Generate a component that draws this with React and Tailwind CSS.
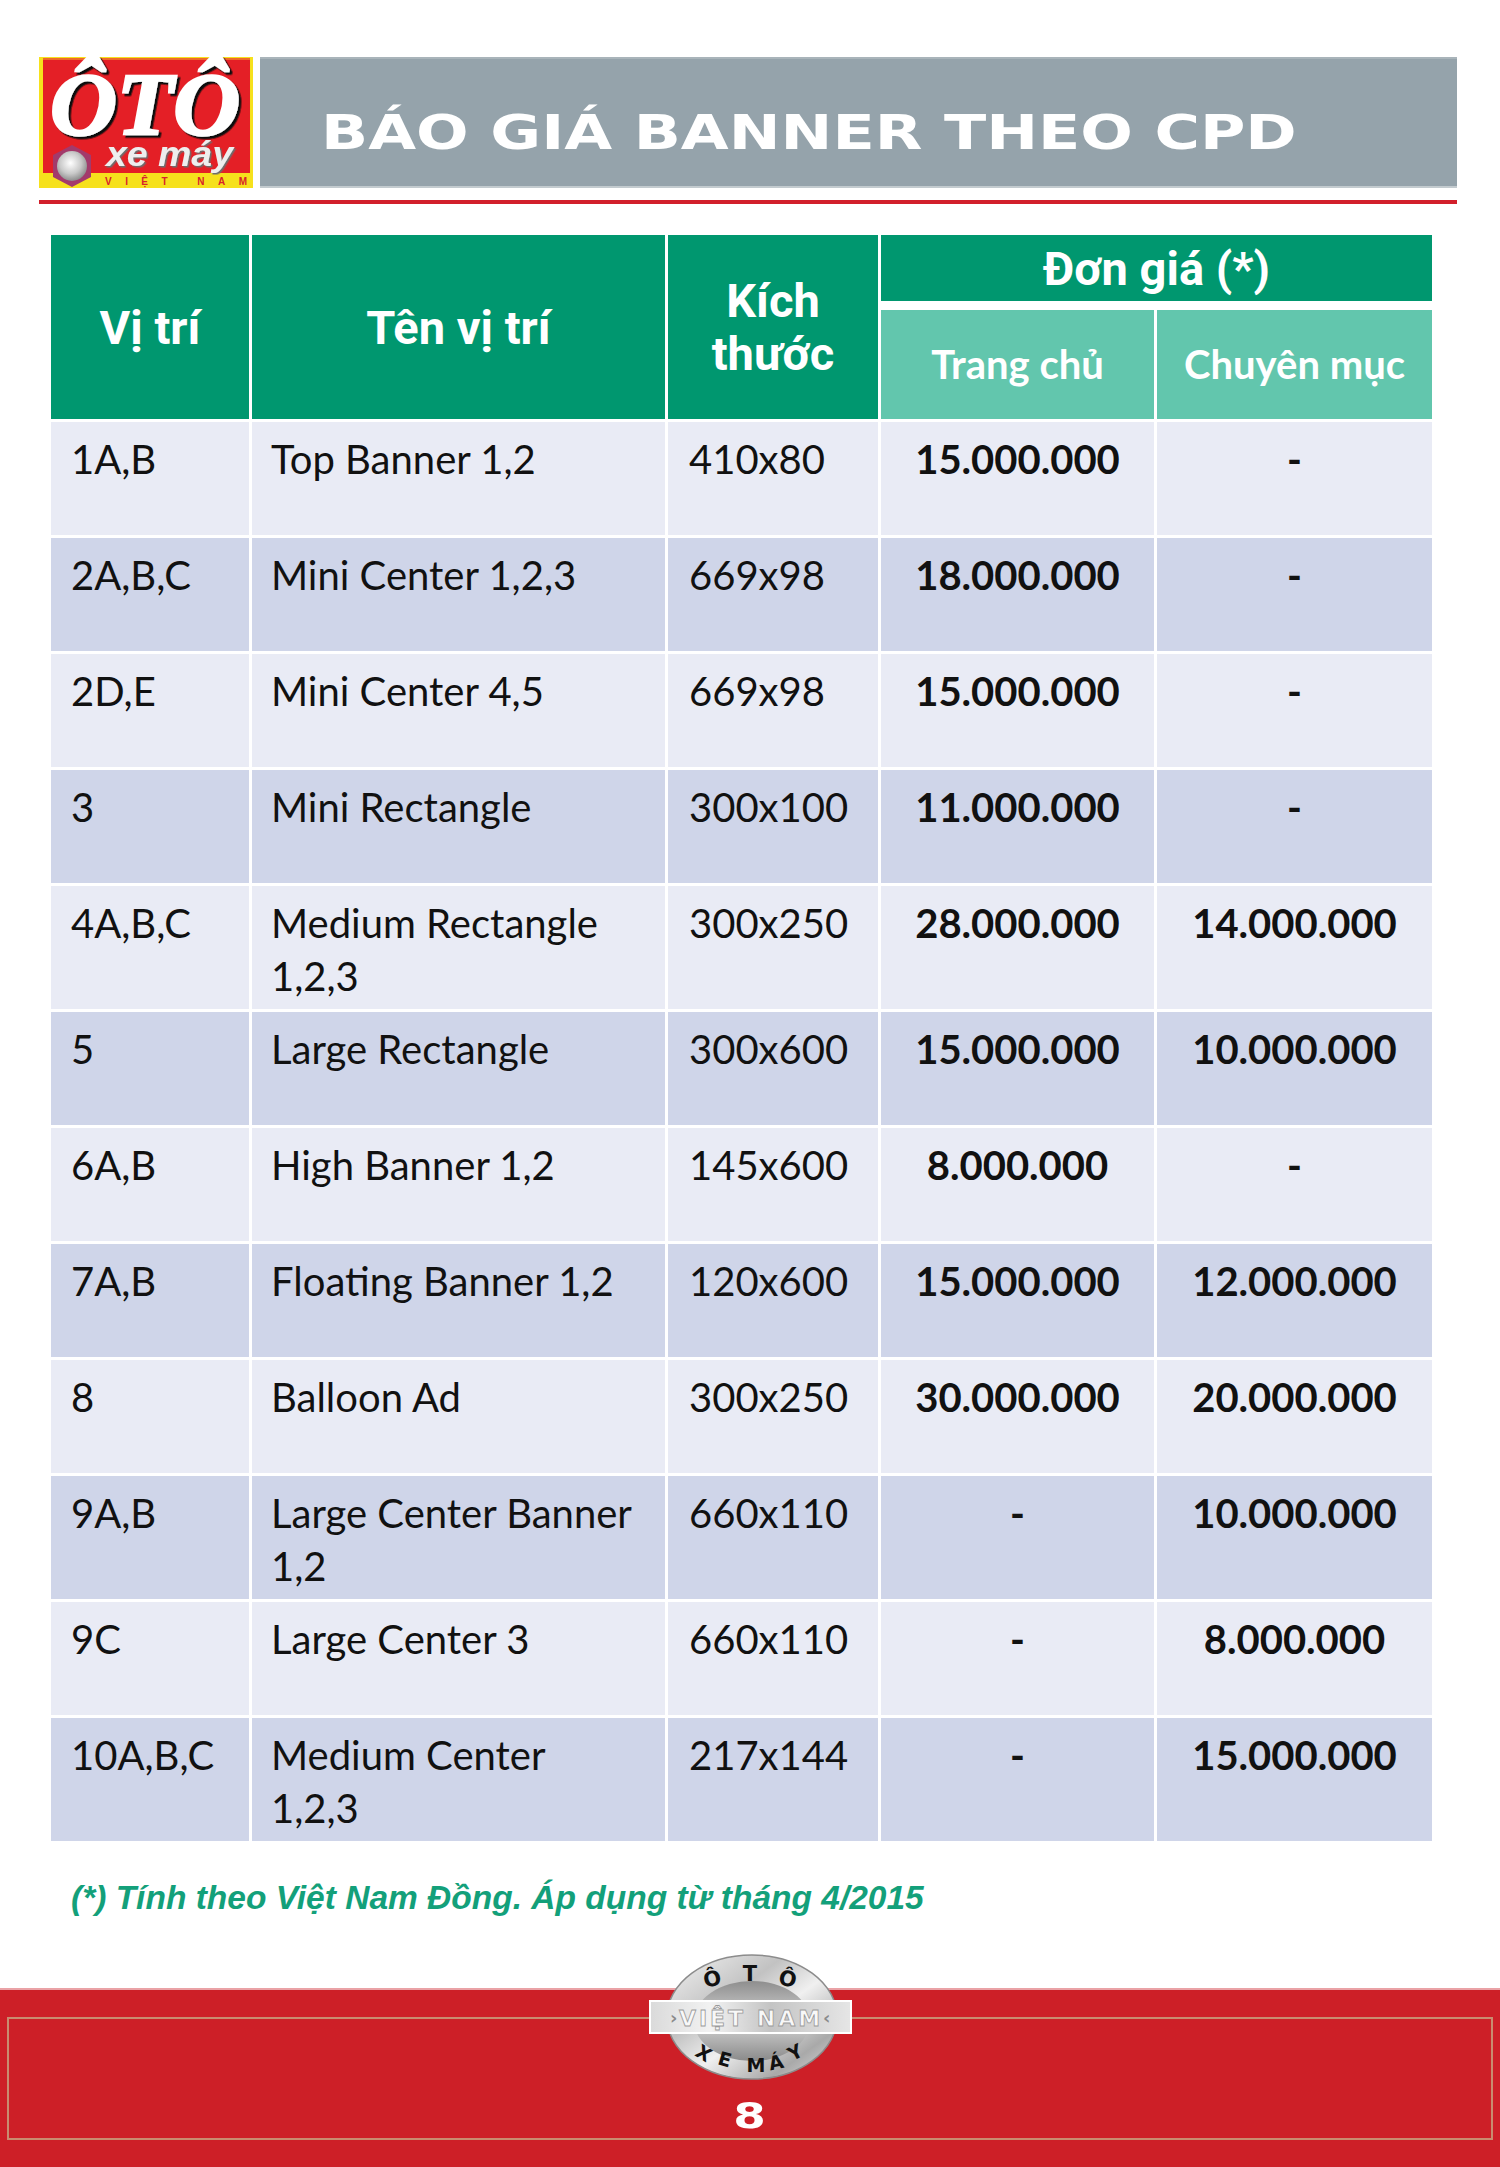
import React from "react";

const rows = [
  ["1A,B", ["Top Banner 1,2"], "410x80", "15.000.000", "-"],
  ["2A,B,C", ["Mini Center 1,2,3"], "669x98", "18.000.000", "-"],
  ["2D,E", ["Mini Center 4,5"], "669x98", "15.000.000", "-"],
  ["3", ["Mini Rectangle"], "300x100", "11.000.000", "-"],
  ["4A,B,C", ["Medium Rectangle", "1,2,3"], "300x250", "28.000.000", "14.000.000"],
  ["5", ["Large Rectangle"], "300x600", "15.000.000", "10.000.000"],
  ["6A,B", ["High Banner 1,2"], "145x600", "8.000.000", "-"],
  ["7A,B", ["Floating Banner 1,2"], "120x600", "15.000.000", "12.000.000"],
  ["8", ["Balloon Ad"], "300x250", "30.000.000", "20.000.000"],
  ["9A,B", ["Large Center Banner", "1,2"], "660x110", "-", "10.000.000"],
  ["9C", ["Large Center 3"], "660x110", "-", "8.000.000"],
  ["10A,B,C", ["Medium Center", "1,2,3"], "217x144", "-", "15.000.000"],
];

function Logo() {
  return (
    <svg width="214" height="131" viewBox="0 0 214 131" className="block shrink-0">
      <defs>
        <radialGradient id="gem" cx="0.45" cy="0.4" r="0.6">
          <stop offset="0" stopColor="#ffffff" />
          <stop offset="0.6" stopColor="#c9c9c9" />
          <stop offset="1" stopColor="#8d8d8d" />
        </radialGradient>
        <filter id="shadow" x="-10%" y="-10%" width="130%" height="130%">
          <feDropShadow dx="2.5" dy="2.5" stdDeviation="0.6" floodColor="#111111" floodOpacity="1" />
        </filter>
        <filter id="shadow2" x="-10%" y="-10%" width="130%" height="140%">
          <feDropShadow dx="1.5" dy="1.5" stdDeviation="0.4" floodColor="#6d6d6d" floodOpacity="1" />
        </filter>
      </defs>
      <rect x="0" y="0" width="214" height="131" fill="#f6e11c" />
      <rect x="4" y="1" width="207" height="115" fill="#e41f26" />
      <rect x="4" y="1" width="207" height="2" fill="#ee6a2a" />
      <text
        x="11"
        y="77"
        textLength="190"
        lengthAdjust="spacingAndGlyphs"
        fontFamily="'Liberation Serif', serif"
        fontWeight="bold"
        fontStyle="italic"
        fontSize="88"
        fill="#ffffff"
        stroke="#ffffff"
        strokeWidth="2.5"
        filter="url(#shadow)"
      >
        ÔTÔ
      </text>
      <polygon points="33,88 52,98 52,120 33,130 14,120 14,98" fill="#a33a6b" />
      <circle cx="33" cy="109" r="15" fill="url(#gem)" />
      <text
        x="67"
        y="109"
        textLength="127"
        lengthAdjust="spacingAndGlyphs"
        fontFamily="'Liberation Sans', sans-serif"
        fontWeight="bold"
        fontStyle="italic"
        fontSize="35"
        fill="#eeeeee"
        filter="url(#shadow2)"
      >
        xe máy
      </text>
      <text
        x="66"
        y="128"
        textLength="142"
        lengthAdjust="spacing"
        fontFamily="'Liberation Sans', sans-serif"
        fontWeight="bold"
        fontSize="10"
        fill="#d8232a"
      >
        VIỆT NAM
      </text>
    </svg>
  );
}

function Emblem() {
  return (
    <svg width="205" height="126" viewBox="0 0 205 126" className="block">
      <defs>
        <linearGradient id="ring" x1="0" y1="0" x2="1" y2="1">
          <stop offset="0" stopColor="#f4f4f4" />
          <stop offset="0.35" stopColor="#c2c2c2" />
          <stop offset="0.55" stopColor="#f0f0f0" />
          <stop offset="0.8" stopColor="#a9a9a9" />
          <stop offset="1" stopColor="#e3e3e3" />
        </linearGradient>
        <linearGradient id="inner" x1="0" y1="0" x2="0" y2="1">
          <stop offset="0" stopColor="#8e8e8e" />
          <stop offset="0.5" stopColor="#d6d6d6" />
          <stop offset="1" stopColor="#8a8a8a" />
        </linearGradient>
        <linearGradient id="band" x1="0" y1="0" x2="1" y2="0">
          <stop offset="0" stopColor="#dadada" />
          <stop offset="0.3" stopColor="#f2f2f2" />
          <stop offset="0.6" stopColor="#c4c4c4" />
          <stop offset="1" stopColor="#e6e6e6" />
        </linearGradient>
      </defs>
      <ellipse cx="104" cy="63" rx="85" ry="62" fill="url(#ring)" stroke="#8c8c8c" strokeWidth="1.5" />
      <ellipse cx="104" cy="67" rx="58" ry="40" fill="url(#inner)" />
      <g fontFamily="'DejaVu Sans', sans-serif" fontWeight="bold" fill="#111111" textAnchor="middle">
        <text x="64" y="32" fontSize="21" transform="rotate(-12 64 24)">Ô</text>
        <text x="102" y="27" fontSize="21">T</text>
        <text x="140" y="32" fontSize="21" transform="rotate(12 140 24)">Ô</text>
        <text x="56" y="106" fontSize="19" transform="rotate(32 56 99)">X</text>
        <text x="77" y="112" fontSize="19" transform="rotate(16 77 105)">E</text>
        <text x="108" y="118" fontSize="19">M</text>
        <text x="128" y="115" fontSize="19" transform="rotate(-12 128 108)">Á</text>
        <text x="147" y="105" fontSize="19" transform="rotate(-28 147 98)">Y</text>
      </g>
      <rect x="2" y="47" width="201" height="32" fill="url(#band)" stroke="#ffffff" strokeWidth="2" />
      <text x="22" y="70" fontSize="18" fill="#8a8a8a" fontFamily="'DejaVu Sans', sans-serif" fontWeight="bold">›</text>
      <text x="175" y="70" fontSize="18" fill="#8a8a8a" fontFamily="'DejaVu Sans', sans-serif" fontWeight="bold">‹</text>
      <text
        x="103"
        y="72"
        textAnchor="middle"
        fontFamily="'DejaVu Sans', sans-serif"
        fontWeight="bold"
        fontSize="22"
        letterSpacing="3"
        fill="#f8f8f8"
        stroke="#9a9a9a"
        strokeWidth="0.8"
      >
        VIỆT NAM
      </text>
    </svg>
  );
}

export default function App() {
  return (
    <div
      className="w-[1500px] h-[2167px] bg-white flex flex-col overflow-hidden"
      style={{ fontFamily: "Lato, 'Liberation Sans', sans-serif" }}
    >
      {/* Header */}
      <div className="pt-[57px] pl-[39px] pr-[43px]">
        <div className="flex h-[131px] gap-[7px]">
          <Logo />
          <div className="flex-1 bg-[#95a3ab] border-t-2 border-b-2 border-t-[#a9b4ba] border-b-[#c3cbcf] pl-[61px] pt-[49px]">
            <div
              className="inline-block origin-left scale-x-[1.29] text-white font-bold text-[48px] leading-none whitespace-nowrap"
              style={{ fontFamily: "'DejaVu Sans', sans-serif" }}
            >
              BÁO GIÁ BANNER THEO CPD
            </div>
          </div>
        </div>
        <div className="mt-[12px] h-[4px] bg-[#d21f2b]" />
      </div>

      {/* Table */}
      <div className="mt-[31px] pl-[51px]">
        <div className="w-[1381px]">
          <div className="grid grid-cols-[198px_413px_210px_273px_275px] grid-rows-[66px_109px] gap-x-[3px] gap-y-[9px] text-white">
            <div
              className="row-span-2 bg-[#00976f] flex items-center justify-center font-bold text-[47px] leading-[53px]"
              style={{ fontFamily: "Roboto, 'Liberation Sans', sans-serif" }}
            >
              Vị trí
            </div>
            <div
              className="row-span-2 bg-[#00976f] flex items-center justify-center font-bold text-[47px] leading-[53px]"
              style={{ fontFamily: "Roboto, 'Liberation Sans', sans-serif" }}
            >
              Tên vị trí
            </div>
            <div
              className="row-span-2 bg-[#00976f] flex items-center justify-center text-center font-bold text-[47px] leading-[53px]"
              style={{ fontFamily: "Roboto, 'Liberation Sans', sans-serif" }}
            >
              Kích
              <br />
              thước
            </div>
            <div
              className="col-span-2 bg-[#00976f] flex items-center justify-center font-bold text-[47px] leading-[53px]"
              style={{ fontFamily: "Roboto, 'Liberation Sans', sans-serif" }}
            >
              Đơn giá (*)
            </div>
            <div className="bg-[#62c6ad] flex items-center justify-center font-bold text-[40px] leading-[53px]">
              Trang chủ
            </div>
            <div className="bg-[#62c6ad] flex items-center justify-center font-bold text-[40px] leading-[53px]">
              Chuyên mục
            </div>
          </div>

          {rows.map((r, i) => {
            const bg = i % 2 === 0 ? "bg-[#e9ebf5]" : "bg-[#cfd5e9]";
            return (
              <div
                key={i}
                className="mt-[3px] grid grid-cols-[198px_413px_210px_273px_275px] gap-x-[3px] text-[40px] leading-[53px] text-[#111111]"
              >
                <div className={`${bg} min-h-[113px] pl-[20px] pt-[11px] pb-[6px] whitespace-nowrap`}>{r[0]}</div>
                <div className={`${bg} min-h-[113px] pl-[19px] pt-[11px] pb-[6px] whitespace-nowrap`}>
                  {r[1].map((l, j) => (
                    <div key={j}>{l}</div>
                  ))}
                </div>
                <div className={`${bg} min-h-[113px] pl-[21px] pt-[11px] pb-[6px] whitespace-nowrap`}>{r[2]}</div>
                <div className={`${bg} min-h-[113px] pt-[11px] pb-[6px] text-center font-bold whitespace-nowrap`}>{r[3]}</div>
                <div className={`${bg} min-h-[113px] pt-[11px] pb-[6px] text-center font-bold whitespace-nowrap`}>{r[4]}</div>
              </div>
            );
          })}
        </div>
      </div>

      {/* Footnote */}
      <div
        className="mt-[40px] pl-[71px] text-[33.5px] leading-[33px] font-bold italic text-[#13a07a] whitespace-nowrap"
        style={{ fontFamily: "'Liberation Sans', sans-serif" }}
      >
        (*) Tính theo Việt Nam Đồng. Áp dụng từ tháng 4/2015
      </div>

      {/* Footer */}
      <div className="mt-auto h-[179px] bg-[#cd1f27] border-t-2 border-t-[#eaa2a6] relative pt-[27px]">
        <div className="mx-[7px] h-[123px] border-2 border-[#c98b6f] flex justify-center pt-[79px]">
          <div
            className="inline-block scale-x-[1.3] text-white font-bold text-[36px] leading-none"
            style={{ fontFamily: "'DejaVu Sans', sans-serif" }}
          >
            8
          </div>
        </div>
        <div className="absolute left-[648px] top-[-36px]">
          <Emblem />
        </div>
      </div>
    </div>
  );
}
